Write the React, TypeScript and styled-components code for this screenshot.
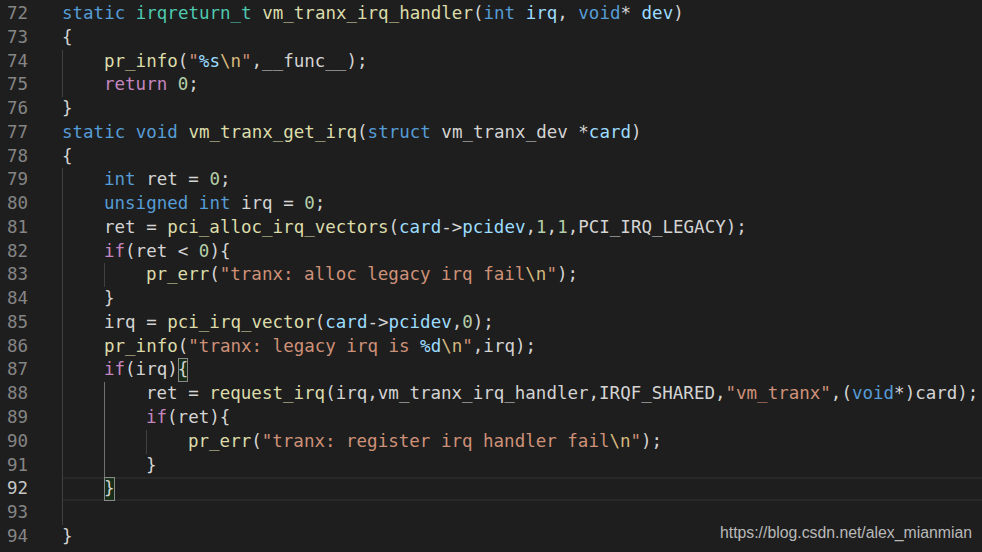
import React from "react";
import styled, { createGlobalStyle } from "styled-components";

const LINE_H = 23.77;

const Global = createGlobalStyle`
  html, body {
    margin: 0;
    padding: 0;
    background: #1e1e1e;
  }
`;

const Editor = styled.div`
  position: relative;
  width: 982px;
  height: 552px;
  overflow: hidden;
  background: #1e1e1e;
  padding-top: 2px;
  box-sizing: border-box;
  font-family: "DejaVu Sans Mono", "Liberation Mono", monospace;
  font-size: 17.5px;
  display: flex;
  flex-direction: column;
`;

const Row = styled.div`
  display: flex;
  height: ${LINE_H}px;
  line-height: ${LINE_H}px;
  flex: none;
`;

const Gutter = styled.div<{ $active?: boolean }>`
  width: 62px;
  flex: none;
  box-sizing: border-box;
  padding-right: 34px;
  text-align: right;
  color: ${(p) => (p.$active ? "#c6c6c6" : "#858585")};
`;

const Code = styled.div<{ $current?: boolean }>`
  flex: 1;
  white-space: pre;
  color: #d4d4d4;
  box-shadow: ${(p) =>
    p.$current ? "inset 0 2px 0 #282828, inset 0 -2px 0 #282828" : "none"};
`;

const Indent = styled.span<{ $guide: "on" | "active" }>`
  display: inline-block;
  box-sizing: border-box;
  width: 42px;
  height: ${LINE_H}px;
  vertical-align: top;
  border-left: 1px solid ${(p) => (p.$guide === "active" ? "#707070" : "#404040")};
`;

const Match = styled.span`
  display: inline-block;
  height: ${LINE_H}px;
  vertical-align: top;
  background: rgba(0, 100, 0, 0.22);
  box-shadow: inset 0 0 0 1px #888888;
`;

const COLORS: Record<string, string> = {
  k: "#569cd6",
  t: "#4ec9b0",
  f: "#dcdcaa",
  v: "#9cdcfe",
  c: "#c586c0",
  n: "#b5cea8",
  s: "#ce9178",
  e: "#d7ba7d",
  p: "#9cdcfe",
  d: "#d4d4d4",
};

const Tok = styled.span<{ $c: string }>`
  color: ${(p) => COLORS[p.$c]};
`;

const Watermark = styled.div`
  position: absolute;
  right: 10px;
  bottom: 10px;
  font-family: "Liberation Sans", Arial, sans-serif;
  font-size: 15.8px;
  line-height: 18px;
  color: #b9b9b9;
`;

type Part = [string, string] | { g: "on" | "active" } | { m: string };

type Line = { n: number; parts: Part[]; current?: boolean };

const G: Part = { g: "on" };
const A: Part = { g: "active" };

const lines: Line[] = [
  {
    n: 72,
    parts: [
      ["static", "k"], [" ", "d"], ["irqreturn_t", "t"], [" ", "d"],
      ["vm_tranx_irq_handler", "f"], ["(", "d"], ["int", "k"], [" ", "d"],
      ["irq", "v"], [", ", "d"], ["void", "k"], ["* ", "d"], ["dev", "v"], [")", "d"],
    ],
  },
  { n: 73, parts: [["{", "d"]] },
  {
    n: 74,
    parts: [
      G, ["pr_info", "f"], ["(", "d"], ['"', "s"], ["%s", "p"], ["\\n", "e"],
      ['"', "s"], [",__func__);", "d"],
    ],
  },
  { n: 75, parts: [G, ["return", "c"], [" ", "d"], ["0", "n"], [";", "d"]] },
  { n: 76, parts: [["}", "d"]] },
  {
    n: 77,
    parts: [
      ["static", "k"], [" ", "d"], ["void", "k"], [" ", "d"], ["vm_tranx_get_irq", "f"],
      ["(", "d"], ["struct", "k"], [" vm_tranx_dev *", "d"], ["card", "v"], [")", "d"],
    ],
  },
  { n: 78, parts: [["{", "d"]] },
  { n: 79, parts: [G, ["int", "k"], [" ret = ", "d"], ["0", "n"], [";", "d"]] },
  {
    n: 80,
    parts: [G, ["unsigned", "k"], [" ", "d"], ["int", "k"], [" irq = ", "d"], ["0", "n"], [";", "d"]],
  },
  {
    n: 81,
    parts: [
      G, ["ret = ", "d"], ["pci_alloc_irq_vectors", "f"], ["(", "d"], ["card", "v"],
      ["->", "d"], ["pcidev", "v"], [",", "d"], ["1", "n"], [",", "d"], ["1", "n"],
      [",PCI_IRQ_LEGACY);", "d"],
    ],
  },
  { n: 82, parts: [G, ["if", "c"], ["(ret < ", "d"], ["0", "n"], ["){", "d"]] },
  {
    n: 83,
    parts: [
      G, G, ["pr_err", "f"], ["(", "d"], ['"tranx: alloc legacy irq fail', "s"],
      ["\\n", "e"], ['"', "s"], [");", "d"],
    ],
  },
  { n: 84, parts: [G, ["}", "d"]] },
  {
    n: 85,
    parts: [
      G, ["irq = ", "d"], ["pci_irq_vector", "f"], ["(", "d"], ["card", "v"], ["->", "d"],
      ["pcidev", "v"], [",", "d"], ["0", "n"], [");", "d"],
    ],
  },
  {
    n: 86,
    parts: [
      G, ["pr_info", "f"], ["(", "d"], ['"tranx: legacy irq is ', "s"], ["%d", "p"],
      ["\\n", "e"], ['"', "s"], [",irq);", "d"],
    ],
  },
  { n: 87, parts: [G, ["if", "c"], ["(irq)", "d"], { m: "{" }] },
  {
    n: 88,
    parts: [
      G, A, ["ret = ", "d"], ["request_irq", "f"],
      ["(irq,vm_tranx_irq_handler,IRQF_SHARED,", "d"], ['"vm_tranx"', "s"],
      [",(", "d"], ["void", "k"], ["*)card);", "d"],
    ],
  },
  { n: 89, parts: [G, A, ["if", "c"], ["(ret){", "d"]] },
  {
    n: 90,
    parts: [
      G, A, G, ["pr_err", "f"], ["(", "d"], ['"tranx: register irq handler fail', "s"],
      ["\\n", "e"], ['"', "s"], [");", "d"],
    ],
  },
  { n: 91, parts: [G, A, ["}", "d"]] },
  { n: 92, parts: [G, { m: "}" }], current: true },
  { n: 93, parts: [G] },
  { n: 94, parts: [["}", "d"]] },
];

function renderPart(p: Part, i: number) {
  if (Array.isArray(p)) {
    return (
      <Tok key={i} $c={p[1]}>
        {p[0]}
      </Tok>
    );
  }
  if ("g" in p) return <Indent key={i} $guide={p.g} />;
  return <Match key={i}>{p.m}</Match>;
}

export default function App() {
  return (
    <>
      <Global />
      <Editor>
        {lines.map((l) => (
          <Row key={l.n}>
            <Gutter $active={l.current}>{l.n}</Gutter>
            <Code $current={l.current}>{l.parts.map(renderPart)}</Code>
          </Row>
        ))}
        <Watermark>https://blog.csdn.net/alex_mianmian</Watermark>
      </Editor>
    </>
  );
}
